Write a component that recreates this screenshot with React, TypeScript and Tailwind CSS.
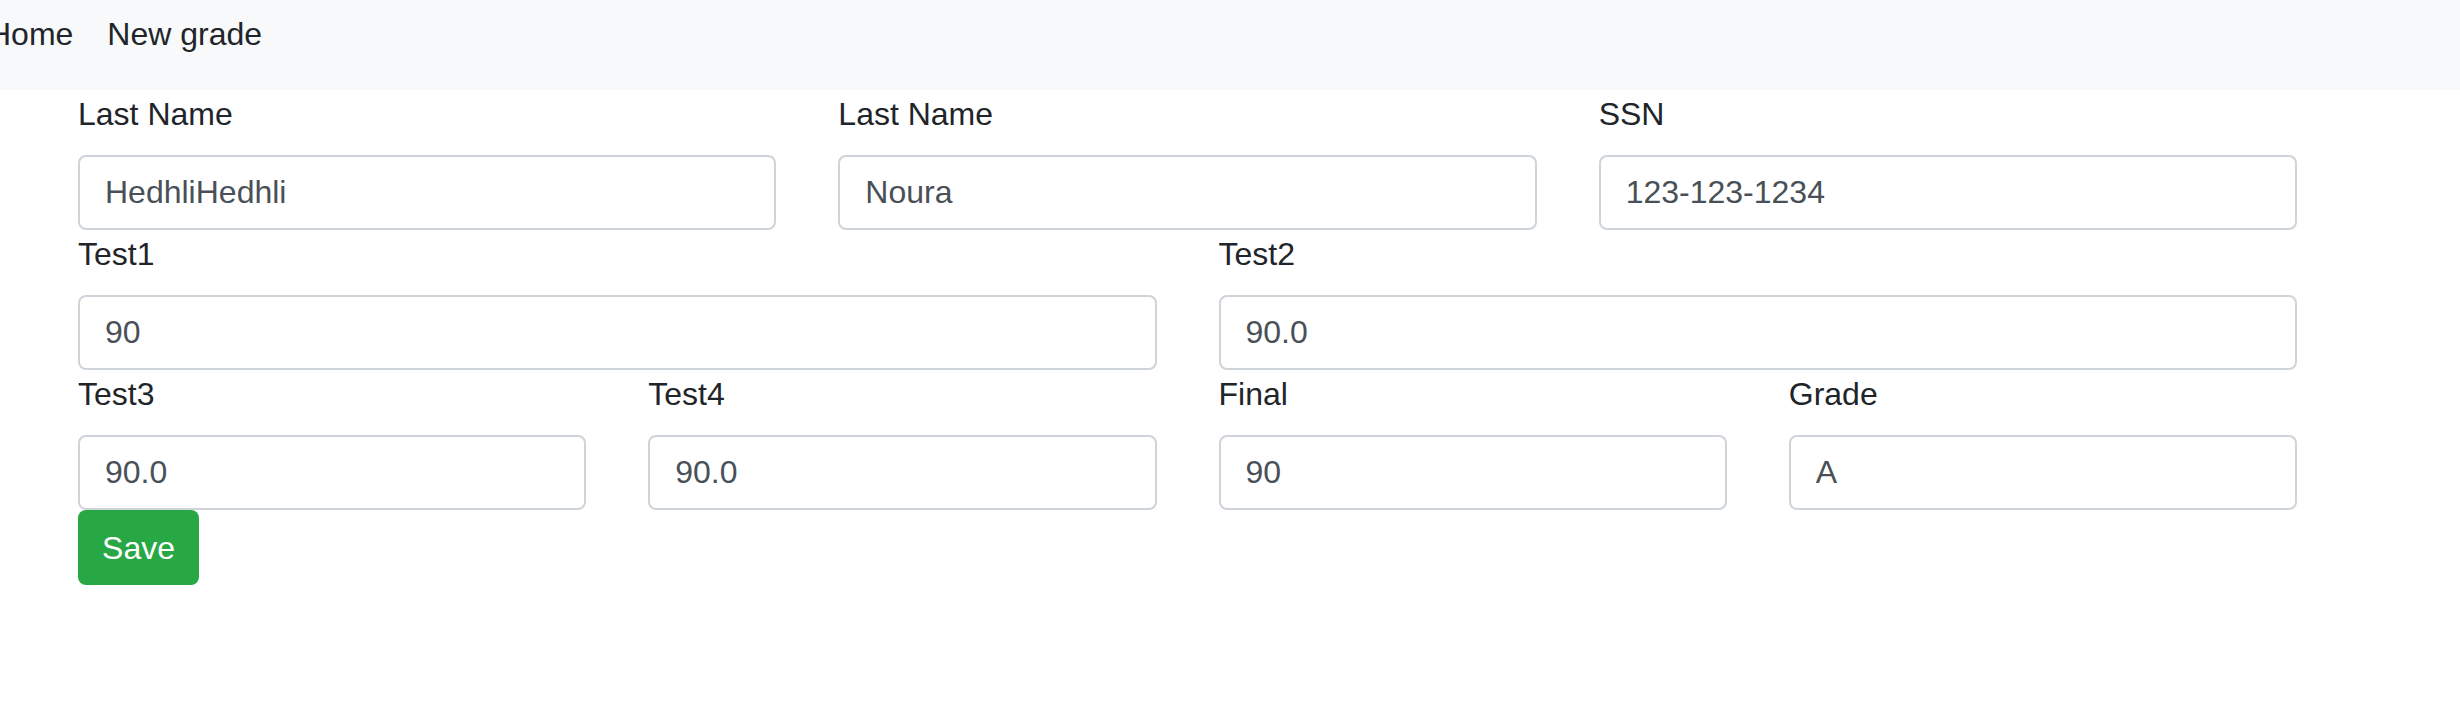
import React from "react";

type Field = { label: string; value: string };

const rows: { cols: string; fields: Field[] }[] = [
  {
    cols: "grid-cols-3",
    fields: [
      { label: "Last Name", value: "HedhliHedhli" },
      { label: "Last Name", value: "Noura" },
      { label: "SSN", value: "123-123-1234" },
    ],
  },
  {
    cols: "grid-cols-2",
    fields: [
      { label: "Test1", value: "90" },
      { label: "Test2", value: "90.0" },
    ],
  },
  {
    cols: "grid-cols-4",
    fields: [
      { label: "Test3", value: "90.0" },
      { label: "Test4", value: "90.0" },
      { label: "Final", value: "90" },
      { label: "Grade", value: "A" },
    ],
  },
];

function FormField({ label, value }: Field) {
  return (
    <div className="flex flex-col">
      <label className="text-[32px] leading-[48px] text-[#212529] mb-[17px]">{label}</label>
      <input
        defaultValue={value}
        className="h-[75px] w-full rounded-[8px] border-2 border-[#ced4da] bg-white px-[25px] text-[32px] text-[#495057] outline-none"
        style={{ fontFamily: '"Liberation Sans", Arial, sans-serif' }}
      />
    </div>
  );
}

export default function App() {
  return (
    <div className="min-h-[712px] bg-white font-['Liberation_Sans',Arial,sans-serif] overflow-hidden">
      <nav className="h-[90px] w-full bg-[#f8f9fa] pt-[10px]">
        <div className="flex gap-[34px] ml-[-12px] text-[32px] leading-[48px] text-[#212529]">
          <a href="#">Home</a>
          <a href="#">New grade</a>
        </div>
      </nav>

      <form className="pl-[78px]" onSubmit={(e) => e.preventDefault()}>
        {rows.map((row, i) => (
          <div key={i} className={`grid ${row.cols} gap-x-[62px] w-[2219px]`}>
            {row.fields.map((f, j) => (
              <FormField key={j} {...f} />
            ))}
          </div>
        ))}
        <button
          type="submit"
          className="h-[75px] w-[121px] rounded-[8px] bg-[#28a745] text-[32px] text-white"
        >
          Save
        </button>
      </form>
    </div>
  );
}
